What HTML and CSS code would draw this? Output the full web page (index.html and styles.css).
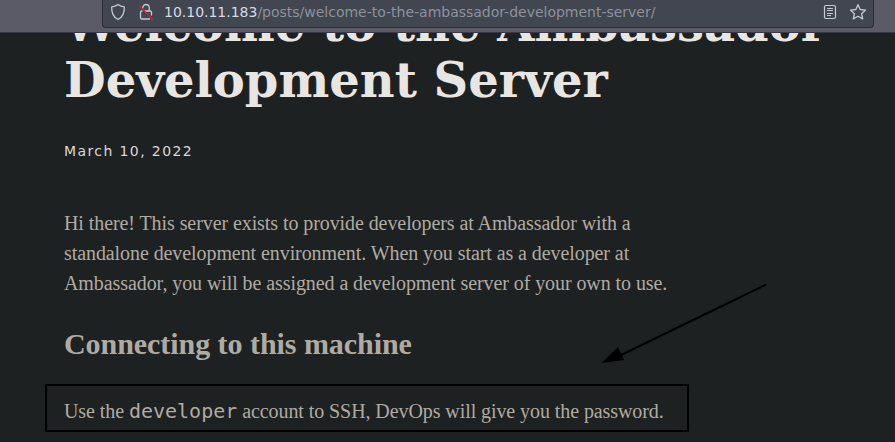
FILE: index.html
```html
<!DOCTYPE html>
<html lang="en">
<head>
<meta charset="utf-8">
<title>Welcome to the Ambassador Development Server</title>
<link rel="stylesheet" href="styles.css">
</head>
<body>
<header class="toolbar">
  <div class="urlbar">
    <svg class="icon shield" width="16" height="18" viewBox="0 0 16 18"><path d="M8 1.500C6.200 2.900 4 3.700 1.700 3.900C1.500 9.200 3.200 14 8 16.500C12.800 14 14.500 9.200 14.300 3.900C12 3.700 9.800 2.900 8 1.500Z"/></svg>
    <svg class="icon lock" width="16" height="18" viewBox="0 0 16 18"><path d="M4.800 5V4.700a3.200 3.200 0 0 1 6.400 0V8"/><path d="M6.500 8H12.300a1.200 1.200 0 0 1 1.200 1.200V12M11.500 16H3.700a1.200 1.200 0 0 1-1.200-1.200V9.200a1.200 1.200 0 0 1 1.200-1.200H4"/><path class="slash" d="M1.500 3L14.500 16.500"/></svg>
    <span class="url"><span class="host">10.10.11.183</span>/posts/welcome-to-the-ambassador-development-server/</span>
    <svg class="icon reader" width="14" height="16" viewBox="0 0 14 16"><rect x="1.500" y="1.500" width="11" height="13" rx="1.500"/><path d="M4.500 4.500H9.500M4.500 6.500H9.500M4.500 9.500H9.500M4.500 11.500H7.500"/></svg>
    <svg class="icon star" width="18" height="18" viewBox="0 0 18 18"><path d="M9 1.700L11.200 6.500L16.500 7.100L12.600 10.700L13.700 15.900L9 13.300L4.300 15.900L5.400 10.700L1.500 7.100L6.800 6.500Z"/></svg>
  </div>
</header>
<main class="page">
  <h1 class="title">Welcome to the Ambassador<br>Development Server</h1>
  <p class="date">March 10, 2022</p>
  <p class="text">Hi there! This server exists to provide developers at Ambassador with a<br>standalone development environment. When you start as a developer at<br>Ambassador, you will be assigned a development server of your own to use.</p>
  <h2 class="subtitle">Connecting to this machine</h2>
  <p class="text callout">Use the <code class="code">developer</code> account to SSH, DevOps will give you the password.</p>
  <svg class="arrow" width="168" height="84" viewBox="0 0 168 84"><path class="shaft" d="M165 4.700L18 76"/><path d="M0.300 83L17 67.200L23 79.900Z"/></svg>
</main>
</body>
</html>
```
FILE: styles.css
```css
* { box-sizing: border-box; }
body {
  margin: 0;
  height: 442px;
  overflow: hidden;
  background: #1e2122;
  font-family: "Liberation Serif", serif;
}
.toolbar {
  height: 33px;
  padding: 0 21px 0 102px;
  background: #5a5b66;
  border-bottom: 1px solid #383945;
}
.urlbar {
  display: flex;
  align-items: center;
  height: 28px;
  padding: 0 6px 3px 7px;
  background: #414650;
  border: 1px solid #2b2e39;
  border-top: 0;
  border-radius: 0 0 4px 4px;
}
.icon {
  flex: none;
  fill: none;
  stroke: #c5c9d3;
  stroke-width: 1.3;
  stroke-linejoin: round;
  stroke-linecap: round;
}
.shield { margin-right: 12px; }
.lock { margin-right: 10px; }
.slash { stroke: #e2143f; }
.url {
  flex: 1;
  white-space: nowrap;
  font: 14px/20px "DejaVu Sans", sans-serif;
  letter-spacing: -0.01px;
  color: #8d929c;
}
.host { color: #d6dbe5; }
.reader { margin-right: 12px; stroke-width: 1.2; }
.page {
  position: relative;
  height: 409px;
  padding: 0 46px;
  overflow: hidden;
  color: #afaba2;
}
.title {
  margin: -37px 0 0 18px;
  font: 700 48px/56px "DejaVu Serif", serif;
  white-space: nowrap;
  color: #e8e6e3;
}
.date {
  margin: 33px 0 0 18px;
  font: 14px/20px "DejaVu Sans", sans-serif;
  letter-spacing: 1.4px;
  color: #dad7d2;
}
.text {
  margin: 47px 0 0 18px;
  font-size: 20px;
  line-height: 30px;
  letter-spacing: -0.08px;
  white-space: nowrap;
}
.subtitle {
  margin: 28px 0 0 18px;
  font-size: 30px;
  line-height: 36px;
  letter-spacing: -0.05px;
}
.callout {
  width: 644px;
  height: 48px;
  margin: 22px 0 0 -1px;
  padding: 10px 0 0 17px;
  border: 2px solid #000;
  border-radius: 1px;
}
.code {
  font: 20px/20px "DejaVu Sans Mono", monospace;
  letter-spacing: 0;
}
.arrow { position: absolute; left: 601px; top: 247px; }
.shaft { stroke: #000; stroke-width: 2; }
```
